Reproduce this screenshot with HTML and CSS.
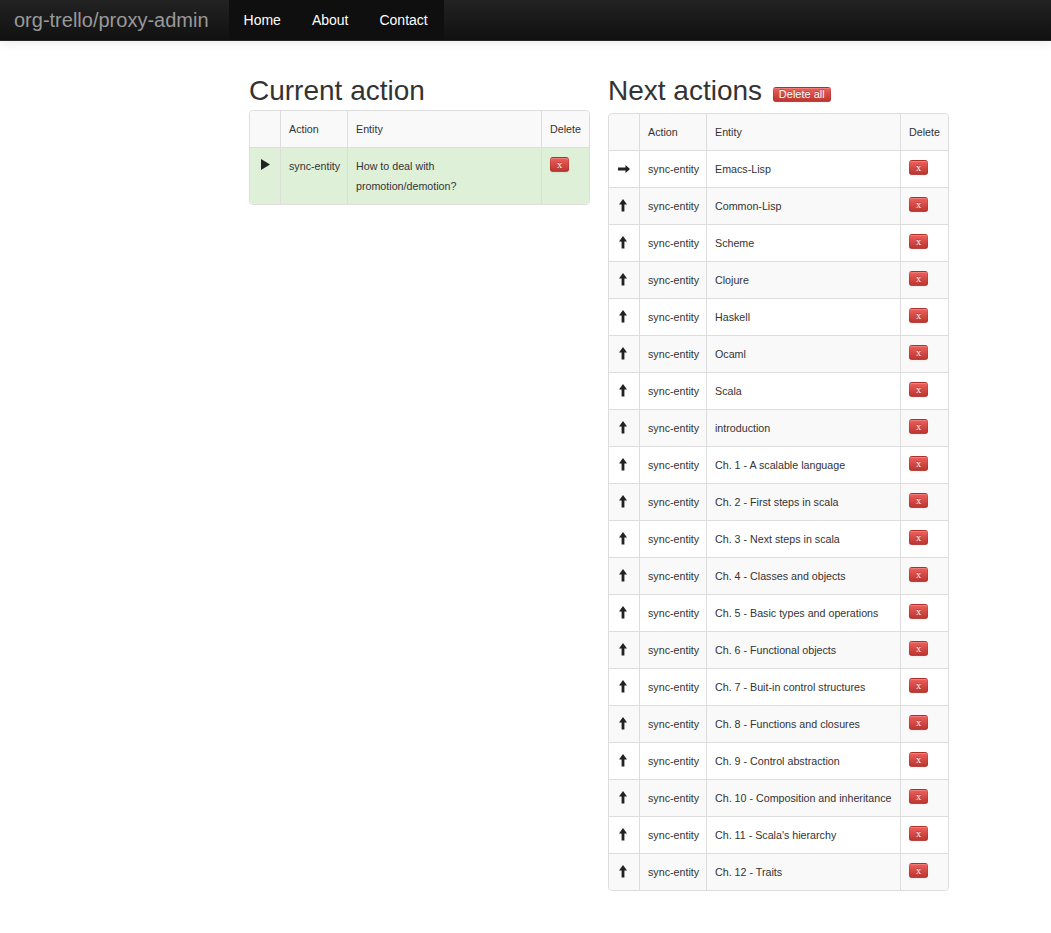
FILE: index.html
```html
<!DOCTYPE html>
<html>
<head>
<meta charset="utf-8">
<title>org-trello/proxy-admin</title>
<link rel="stylesheet" href="styles.css">
</head>
<body>
<header class="navbar">
  <a class="brand" href="#">org-trello/proxy-admin</a>
  <ul class="nav">
    <li><a href="#">Home</a></li>
    <li><a href="#">About</a></li>
    <li><a href="#">Contact</a></li>
  </ul>
</header>

<main class="page">
  <section class="col">
    <h2 class="title">Current action</h2>
    <table class="grid">
      <tbody>
        <tr class="head">
          <td class="c-icon"></td>
          <td class="c-action">Action</td>
          <td class="c-entity">Entity</td>
          <td class="c-del">Delete</td>
        </tr>
        <tr class="success">
          <td><svg class="icon" viewBox="0 0 14 14"><polygon points="3,0 3,11 12,5.5" fill="#222"/></svg></td>
          <td class="nowrap">sync-entity</td>
          <td>How to deal with promotion/demotion?</td>
          <td><button class="btn-x">x</button></td>
        </tr>
      </tbody>
    </table>
  </section>

  <section class="col">
    <h2 class="title">Next actions <button class="btn-all">Delete all</button></h2>
    <table class="grid grid-next">
      <tbody id="next">
        <tr class="head">
          <td class="c-icon"></td>
          <td class="c-action">Action</td>
          <td class="c-entity">Entity</td>
          <td class="c-del">Delete</td>
        </tr>
        <tr>
          <td><svg class="icon icon-next" viewBox="0 0 14 14"><polygon points="1,5.6 8.5,5.6 8.5,3 13,7 8.5,11 8.5,8.4 1,8.4" fill="#222"/></svg></td>
          <td class="nowrap">sync-entity</td><td>Emacs-Lisp</td><td><button class="btn-x">x</button></td>
        </tr>
        <tr><td><svg class="icon icon-next" viewBox="0 0 14 14"><polygon points="6,0 10,5.5 7.4,5.5 7.4,12.5 4.6,12.5 4.6,5.5 2,5.5" fill="#222"/></svg></td><td class="nowrap">sync-entity</td><td>Common-Lisp</td><td><button class="btn-x">x</button></td></tr>
        <tr><td><svg class="icon icon-next" viewBox="0 0 14 14"><polygon points="6,0 10,5.5 7.4,5.5 7.4,12.5 4.6,12.5 4.6,5.5 2,5.5" fill="#222"/></svg></td><td class="nowrap">sync-entity</td><td>Scheme</td><td><button class="btn-x">x</button></td></tr>
        <tr><td><svg class="icon icon-next" viewBox="0 0 14 14"><polygon points="6,0 10,5.5 7.4,5.5 7.4,12.5 4.6,12.5 4.6,5.5 2,5.5" fill="#222"/></svg></td><td class="nowrap">sync-entity</td><td>Clojure</td><td><button class="btn-x">x</button></td></tr>
        <tr><td><svg class="icon icon-next" viewBox="0 0 14 14"><polygon points="6,0 10,5.5 7.4,5.5 7.4,12.5 4.6,12.5 4.6,5.5 2,5.5" fill="#222"/></svg></td><td class="nowrap">sync-entity</td><td>Haskell</td><td><button class="btn-x">x</button></td></tr>
        <tr><td><svg class="icon icon-next" viewBox="0 0 14 14"><polygon points="6,0 10,5.5 7.4,5.5 7.4,12.5 4.6,12.5 4.6,5.5 2,5.5" fill="#222"/></svg></td><td class="nowrap">sync-entity</td><td>Ocaml</td><td><button class="btn-x">x</button></td></tr>
        <tr><td><svg class="icon icon-next" viewBox="0 0 14 14"><polygon points="6,0 10,5.5 7.4,5.5 7.4,12.5 4.6,12.5 4.6,5.5 2,5.5" fill="#222"/></svg></td><td class="nowrap">sync-entity</td><td>Scala</td><td><button class="btn-x">x</button></td></tr>
        <tr><td><svg class="icon icon-next" viewBox="0 0 14 14"><polygon points="6,0 10,5.5 7.4,5.5 7.4,12.5 4.6,12.5 4.6,5.5 2,5.5" fill="#222"/></svg></td><td class="nowrap">sync-entity</td><td>introduction</td><td><button class="btn-x">x</button></td></tr>
        <tr><td><svg class="icon icon-next" viewBox="0 0 14 14"><polygon points="6,0 10,5.5 7.4,5.5 7.4,12.5 4.6,12.5 4.6,5.5 2,5.5" fill="#222"/></svg></td><td class="nowrap">sync-entity</td><td>Ch. 1 - A scalable language</td><td><button class="btn-x">x</button></td></tr>
        <tr><td><svg class="icon icon-next" viewBox="0 0 14 14"><polygon points="6,0 10,5.5 7.4,5.5 7.4,12.5 4.6,12.5 4.6,5.5 2,5.5" fill="#222"/></svg></td><td class="nowrap">sync-entity</td><td>Ch. 2 - First steps in scala</td><td><button class="btn-x">x</button></td></tr>
        <tr><td><svg class="icon icon-next" viewBox="0 0 14 14"><polygon points="6,0 10,5.5 7.4,5.5 7.4,12.5 4.6,12.5 4.6,5.5 2,5.5" fill="#222"/></svg></td><td class="nowrap">sync-entity</td><td>Ch. 3 - Next steps in scala</td><td><button class="btn-x">x</button></td></tr>
        <tr><td><svg class="icon icon-next" viewBox="0 0 14 14"><polygon points="6,0 10,5.5 7.4,5.5 7.4,12.5 4.6,12.5 4.6,5.5 2,5.5" fill="#222"/></svg></td><td class="nowrap">sync-entity</td><td>Ch. 4 - Classes and objects</td><td><button class="btn-x">x</button></td></tr>
        <tr><td><svg class="icon icon-next" viewBox="0 0 14 14"><polygon points="6,0 10,5.5 7.4,5.5 7.4,12.5 4.6,12.5 4.6,5.5 2,5.5" fill="#222"/></svg></td><td class="nowrap">sync-entity</td><td>Ch. 5 - Basic types and operations</td><td><button class="btn-x">x</button></td></tr>
        <tr><td><svg class="icon icon-next" viewBox="0 0 14 14"><polygon points="6,0 10,5.5 7.4,5.5 7.4,12.5 4.6,12.5 4.6,5.5 2,5.5" fill="#222"/></svg></td><td class="nowrap">sync-entity</td><td>Ch. 6 - Functional objects</td><td><button class="btn-x">x</button></td></tr>
        <tr><td><svg class="icon icon-next" viewBox="0 0 14 14"><polygon points="6,0 10,5.5 7.4,5.5 7.4,12.5 4.6,12.5 4.6,5.5 2,5.5" fill="#222"/></svg></td><td class="nowrap">sync-entity</td><td>Ch. 7 - Buit-in control structures</td><td><button class="btn-x">x</button></td></tr>
        <tr><td><svg class="icon icon-next" viewBox="0 0 14 14"><polygon points="6,0 10,5.5 7.4,5.5 7.4,12.5 4.6,12.5 4.6,5.5 2,5.5" fill="#222"/></svg></td><td class="nowrap">sync-entity</td><td>Ch. 8 - Functions and closures</td><td><button class="btn-x">x</button></td></tr>
        <tr><td><svg class="icon icon-next" viewBox="0 0 14 14"><polygon points="6,0 10,5.5 7.4,5.5 7.4,12.5 4.6,12.5 4.6,5.5 2,5.5" fill="#222"/></svg></td><td class="nowrap">sync-entity</td><td>Ch. 9 - Control abstraction</td><td><button class="btn-x">x</button></td></tr>
        <tr><td><svg class="icon icon-next" viewBox="0 0 14 14"><polygon points="6,0 10,5.5 7.4,5.5 7.4,12.5 4.6,12.5 4.6,5.5 2,5.5" fill="#222"/></svg></td><td class="nowrap">sync-entity</td><td>Ch. 10 - Composition and inheritance</td><td><button class="btn-x">x</button></td></tr>
        <tr><td><svg class="icon icon-next" viewBox="0 0 14 14"><polygon points="6,0 10,5.5 7.4,5.5 7.4,12.5 4.6,12.5 4.6,5.5 2,5.5" fill="#222"/></svg></td><td class="nowrap">sync-entity</td><td>Ch. 11 - Scala's hierarchy</td><td><button class="btn-x">x</button></td></tr>
        <tr><td><svg class="icon icon-next" viewBox="0 0 14 14"><polygon points="6,0 10,5.5 7.4,5.5 7.4,12.5 4.6,12.5 4.6,5.5 2,5.5" fill="#222"/></svg></td><td class="nowrap">sync-entity</td><td>Ch. 12 - Traits</td><td><button class="btn-x">x</button></td></tr>
      </tbody>
    </table>
  </section>
</main>
</body>
</html>
```

FILE: styles.css
```css
html, body {
  margin: 0;
  padding: 0;
  background: #fff;
}

body {
  font-family: "Liberation Sans", Arial, sans-serif;
  color: #333;
  font-size: 14px;
  line-height: 20px;
}

/* ---------- navbar ---------- */
.navbar {
  display: flex;
  align-items: stretch;
  height: 40px;
  background: linear-gradient(to bottom, #222 0%, #111 100%);
  border-bottom: 1px solid #252525;
  box-shadow: 0 1px 10px rgba(0, 0, 0, 0.1);
}

.brand {
  display: block;
  padding: 10px 20px 10px 14px;
  font-size: 20px;
  line-height: 20px;
  color: #999;
  text-decoration: none;
}

.nav {
  display: flex;
  margin: 0;
  padding: 0;
  list-style: none;
  background: #0f0f0f;
}

.nav a {
  display: block;
  padding: 10px 15px;
  font-size: 14px;
  line-height: 20px;
  color: #fff;
  text-decoration: none;
}

.nav li + li a {
  padding-left: 16px;
}

.nav li:last-child a {
  padding-right: 16px;
}

/* ---------- page ---------- */
.page {
  display: flex;
  gap: 18px;
  margin-left: 249px;
  padding-top: 31px;
  padding-bottom: 40px;
}

.col {
  width: 341px;
}

.title {
  margin: 0;
  font-size: 28px;
  line-height: 38px;
  font-weight: normal;
  color: #333;
}

/* ---------- buttons ---------- */
.btn-x,
.btn-all {
  display: inline-block;
  margin: 0;
  padding: 0 6px;
  color: #fff;
  line-height: 13px;
  border: 1px solid;
  border-color: rgba(0, 0, 0, 0.1) rgba(0, 0, 0, 0.1) rgba(0, 0, 0, 0.25);
  border-radius: 3px;
  background: linear-gradient(to bottom, #ee5f5b 0%, #bd362f 100%);
  box-shadow: inset 0 1px 0 rgba(255, 255, 255, 0.2), 0 1px 2px rgba(0, 0, 0, 0.05);
  text-shadow: 0 -1px 0 rgba(0, 0, 0, 0.25);
  cursor: pointer;
}

.btn-x {
  font-family: "Liberation Serif", "Times New Roman", serif;
  font-size: 10.5px;
  vertical-align: top;
  margin-top: 1px;
}

.btn-all {
  font-family: "Liberation Sans", Arial, sans-serif;
  font-size: 11px;
  margin-left: 3px;
  padding: 0 5px;
  vertical-align: 2px;
}

/* ---------- tables ---------- */
.grid {
  width: 341px;
  table-layout: fixed;
  border-collapse: separate;
  border-spacing: 0;
  border: 1px solid #ddd;
  border-radius: 4px;
  font-size: 10.7px;
  line-height: 20px;
}

.grid-next {
  margin-top: 3px;
}

.grid td {
  padding: 8px;
  text-align: left;
  vertical-align: top;
  border-top: 1px solid #ddd;
  border-left: 1px solid #ddd;
}

.grid td.nowrap {
  white-space: nowrap;
}

.grid tr:first-child td {
  border-top: 0;
}

.grid td:first-child {
  border-left: 0;
}

.grid .c-icon { width: 14px; }
.grid .c-action { width: 50px; }
.grid .c-del { width: 31px; }

.grid tr:nth-child(odd) td {
  background: #f9f9f9;
}

.grid tr.success td {
  background: #dff0d8;
}

.grid tr:first-child td:first-child { border-top-left-radius: 4px; }
.grid tr:first-child td:last-child { border-top-right-radius: 4px; }
.grid tr:last-child td:first-child { border-bottom-left-radius: 4px; }
.grid tr:last-child td:last-child { border-bottom-right-radius: 4px; }

.icon {
  display: block;
  width: 14px;
  height: 14px;
  margin-top: 3px;
}
```
